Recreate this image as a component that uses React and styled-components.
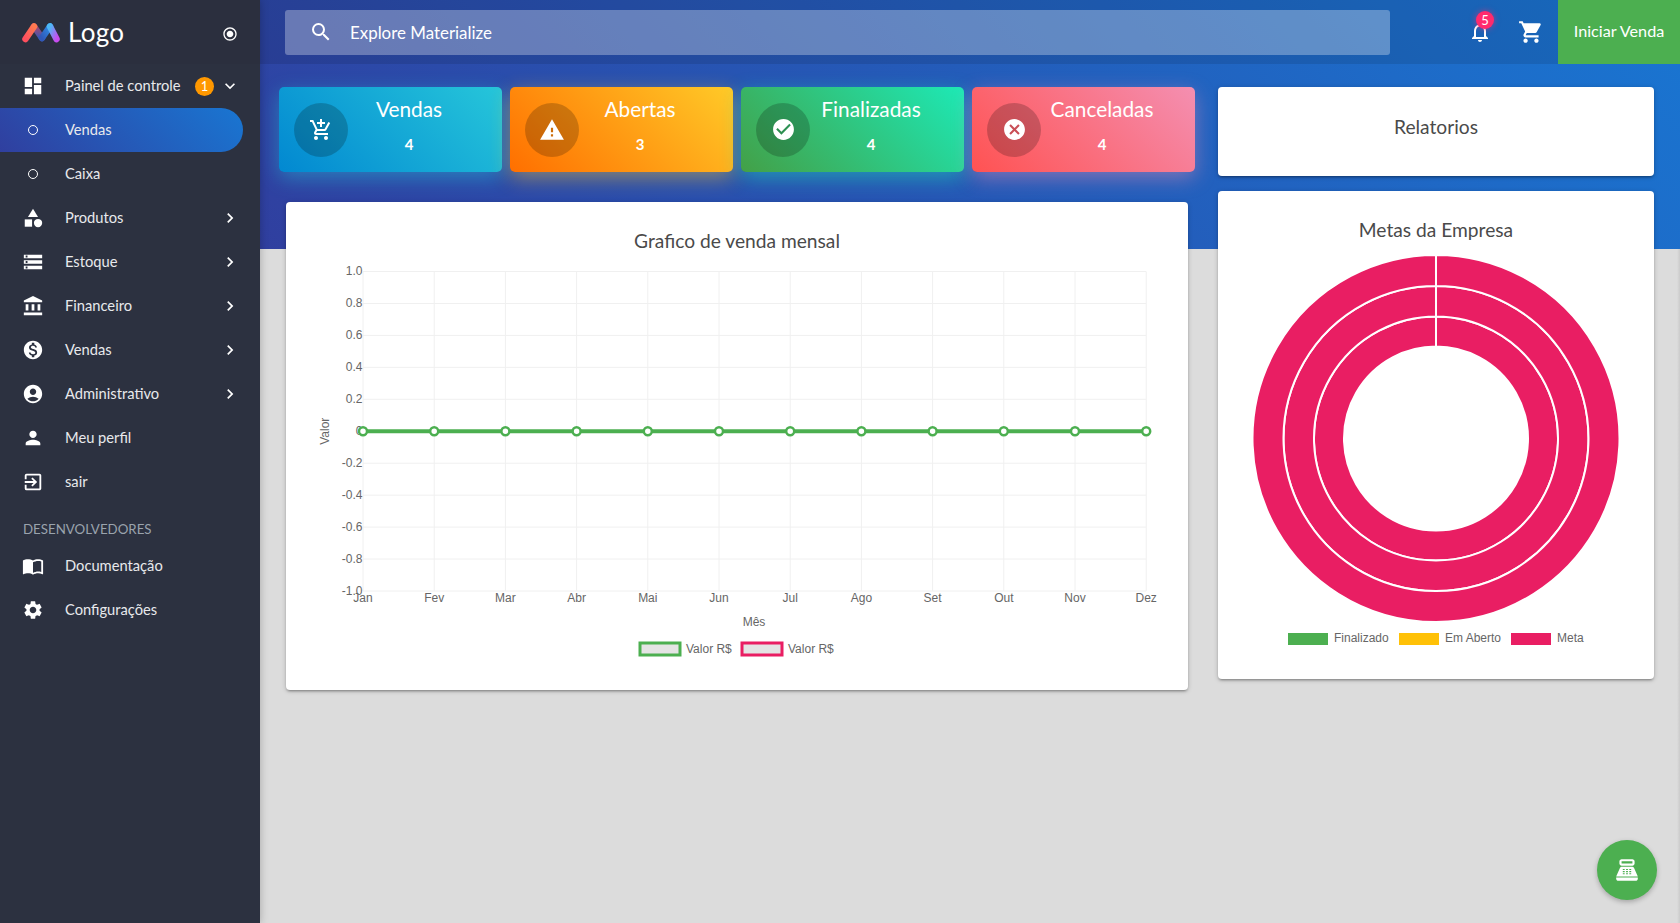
import React from "react";
import styled, { createGlobalStyle } from "styled-components";
import {
  MdDashboard, MdCategory, MdStorage, MdAccountBalance, MdMonetizationOn, MdAccountCircle, MdPerson,
  MdExitToApp, MdImportContacts, MdSettings, MdAddShoppingCart, MdWarning, MdCheckCircle, MdCancel,
  MdNotificationsNone, MdShoppingCart, MdPointOfSale, MdRadioButtonChecked, MdKeyboardArrowRight,
  MdKeyboardArrowDown, MdSearch,
} from "react-icons/md";

const FONT = `"Lato", "Open Sans", sans-serif`;

const Global = createGlobalStyle`
  html, body { margin: 0; padding: 0; height: 100%; overflow: hidden; }
  body { font-family: ${FONT}; background: #dcdcdc; }
  * { box-sizing: border-box; }
`;

const Page = styled.div`
  display: grid;
  grid-template-columns: 260px 1fr;
  width: 1680px;
  height: 923px;
  overflow: hidden;
`;

const Sidebar = styled.aside`
  position: relative;
  z-index: 1;
  background: #2c3140;
  color: #fff;
  display: flex;
  flex-direction: column;
  box-shadow: 0 0 8px rgba(0, 0, 0, 0.25);
`;

const Brand = styled.div`
  height: 64px;
  display: flex;
  align-items: center;
  padding: 0 22px;
  background: #2b2f3e;
`;

const BrandName = styled.span`
  font-size: 26px;
  margin-left: 8px;
  flex: 1;
  letter-spacing: 0.3px;
`;

const BrandToggle = styled(MdRadioButtonChecked)`
  margin-top: 3px;
`;

const Menu = styled.nav`
  display: flex;
  flex-direction: column;
`;

const Item = styled.div`
  height: 44px;
  display: flex;
  align-items: center;
  padding-left: 22px;
  width: ${(p) => (p.$active ? "243px" : "100%")};
  border-radius: ${(p) => (p.$active ? "0 22px 22px 0" : "0")};
  background: ${(p) => (p.$active ? "linear-gradient(45deg, #303f9f, #1976d2)" : "transparent")};
`;

const IconSlot = styled.span`
  width: 22px;
  height: 22px;
  display: flex;
  align-items: center;
  justify-content: center;
  margin-right: 21px;
  color: #fff;
  flex: none;
`;

const Dot = styled.span`
  width: 10px;
  height: 10px;
  border: 1.5px solid #fff;
  border-radius: 50%;
`;

const Label = styled.span`
  font-size: 14.7px;
  color: #e8e9ec;
  flex: 1;
  white-space: nowrap;
  padding-bottom: 2px;
`;

const Count = styled.span`
  width: 19px;
  height: 19px;
  border-radius: 50%;
  background: #ff9800;
  color: #fff;
  font-size: 13px;
  display: flex;
  align-items: center;
  justify-content: center;
  margin-right: 6px;
`;

const Chevron = styled.span`
  width: 20px;
  display: flex;
  justify-content: center;
  margin-right: 20px;
  color: #fff;
`;

const Section = styled.div`
  font-size: 13.3px;
  color: #9aa3ad;
  padding: 15px 0 0 23px;
  height: 40px;
  line-height: 20px;
`;

const Main = styled.main`
  position: relative;
  background:
    linear-gradient(45deg, #303f9f, #1976d2) top left / 100% 249px no-repeat,
    #dcdcdc;
  display: flex;
  flex-direction: column;
`;

const TopBar = styled.header`
  height: 64px;
  display: flex;
  align-items: center;
  background: rgba(0, 0, 0, 0.1);
  padding-left: 25px;
`;

const Search = styled.div`
  width: 1105px;
  height: 45px;
  background: rgba(255, 255, 255, 0.3);
  border-radius: 3px;
  display: flex;
  align-items: center;
  padding-left: 24px;
  color: #fff;
  font-size: 16.9px;
  gap: 17px;
`;

const Tools = styled.div`
  flex: 1;
  display: flex;
  align-items: center;
  height: 100%;
  color: #fff;
`;

const ToolButton = styled.div`
  position: relative;
  display: flex;
  justify-content: center;
  margin-left: ${(p) => p.$gap}px;
`;

const Badge = styled.span`
  position: absolute;
  top: -9px;
  right: -2px;
  width: 18px;
  height: 18px;
  border-radius: 50%;
  background: #ff2a6d;
  box-shadow: 0 0 6px rgba(255, 42, 109, 0.6);
  font-size: 13px;
  display: flex;
  align-items: center;
  justify-content: center;
`;

const StartSale = styled.div`
  margin-left: auto;
  width: 122px;
  height: 100%;
  background: #4caf50;
  color: #fff;
  font-size: 16.2px;
  padding-bottom: 3px;
  display: flex;
  align-items: center;
  justify-content: center;
`;

const Body = styled.div`
  display: grid;
  grid-template-columns: 932px 436px;
  column-gap: 7px;
  padding: 23px 0 0 19px;
`;

const LeftColumn = styled.div`
  display: flex;
  flex-direction: column;
`;

const RightColumn = styled.div`
  display: flex;
  flex-direction: column;
  gap: 15px;
`;

const StatRow = styled.div`
  display: flex;
  gap: 8px;
`;

const Stat = styled.div`
  width: 223px;
  height: 85px;
  border-radius: 5px;
  background: linear-gradient(45deg, ${(p) => p.$from}, ${(p) => p.$to});
  box-shadow: 0 6px 20px 0 ${(p) => p.$glow};
  display: flex;
  align-items: center;
  padding-left: 15px;
  color: #fff;
`;

const StatIcon = styled.span`
  width: 54px;
  height: 54px;
  border-radius: 50%;
  background: rgba(0, 0, 0, 0.2);
  display: flex;
  align-items: center;
  justify-content: center;
  flex: none;
`;

const StatText = styled.div`
  flex: 1;
  text-align: center;
  padding: 0 32px 10px 0;
`;

const StatTitle = styled.div`
  font-size: 20.8px;
  line-height: 26px;
`;

const StatValue = styled.div`
  font-size: 15px;
  font-weight: 700;
  margin-top: 12px;
  line-height: 20px;
`;

const Card = styled.section`
  background: #fff;
  border-radius: 4px;
  box-shadow: 0 2px 2px 0 rgba(0, 0, 0, 0.14), 0 3px 1px -2px rgba(0, 0, 0, 0.12), 0 1px 5px 0 rgba(0, 0, 0, 0.2);
`;

const ChartCard = styled(Card)`
  margin: 30px 0 0 7px;
  width: 902px;
  height: 488px;
  padding-top: 28px;
`;

const CardTitle = styled.h2`
  margin: 0 0 1px;
  font-size: 19.2px;
  font-weight: 400;
  color: #4a4a4a;
  text-align: center;
  line-height: 22px;
`;

const ReportCard = styled(Card)`
  height: 89px;
  display: flex;
  align-items: center;
  justify-content: center;
  font-size: 19.2px;
  color: #4a4a4a;
  padding-bottom: 10px;
`;

const GoalCard = styled(Card)`
  height: 488px;
  padding-top: 28px;
`;

const ChartSvg = styled.svg`
  display: block;
  width: 100%;
`;

const Fab = styled.div`
  position: absolute;
  right: 23px;
  bottom: 23px;
  width: 60px;
  height: 60px;
  border-radius: 50%;
  background: #4caf50;
  color: #fff;
  display: flex;
  align-items: center;
  justify-content: center;
  box-shadow: 0 2px 5px rgba(0, 0, 0, 0.25);
`;

const EdgeShade = styled.div`
  position: absolute;
  right: 0;
  top: 249px;
  bottom: 0;
  width: 3px;
  background: linear-gradient(to right, rgba(0, 0, 0, 0), rgba(0, 0, 0, 0.08));
`;

const Logo = () => (
  <svg width="38" height="21" viewBox="0 0 38 21">
    <defs>
      <linearGradient id="lgA" x1="0" y1="1" x2="1" y2="0">
        <stop offset="0" stopColor="#ff4f5e" />
        <stop offset="1" stopColor="#ff7a50" />
      </linearGradient>
      <linearGradient id="lgM" x1="0" y1="0" x2="0" y2="1">
        <stop offset="0" stopColor="#a8486e" />
        <stop offset="1" stopColor="#3a56b4" />
      </linearGradient>
      <linearGradient id="lgB" x1="0" y1="1" x2="1" y2="0">
        <stop offset="0" stopColor="#3058b8" />
        <stop offset="1" stopColor="#2f8fe8" />
      </linearGradient>
      <linearGradient id="lgC" x1="0" y1="0" x2="1" y2="1">
        <stop offset="0" stopColor="#4cb8f6" />
        <stop offset="1" stopColor="#c84cf0" />
      </linearGradient>
    </defs>
    <path d="M12 4.5 L20 16" fill="none" stroke="url(#lgM)" strokeWidth="6.5" strokeLinecap="round" />
    <path d="M3.5 17 L12 4.5" fill="none" stroke="url(#lgA)" strokeWidth="6.5" strokeLinecap="round" />
    <path d="M20 16 L28 4.5" fill="none" stroke="url(#lgB)" strokeWidth="6.5" strokeLinecap="round" />
    <path d="M28 4.5 L34.5 17" fill="none" stroke="url(#lgC)" strokeWidth="6.5" strokeLinecap="round" />
  </svg>
);

const MONTHS = ["Jan", "Fev", "Mar", "Abr", "Mai", "Jun", "Jul", "Ago", "Set", "Out", "Nov", "Dez"];
const TICKS = ["1.0", "0.8", "0.6", "0.4", "0.2", "0", "-0.2", "-0.4", "-0.6", "-0.8", "-1.0"];

const LineChart = () => {
  const x0 = 77, dx = 71.2, y0 = 18.5, dy = 31.95;
  const xs = MONTHS.map((_, i) => x0 + i * dx);
  const ys = TICKS.map((_, i) => y0 + i * dy);
  const zero = ys[5];
  const bottom = ys[10];
  const t = { fontFamily: "Liberation Sans, sans-serif", fontSize: 12, fill: "#666" };
  return (
    <ChartSvg viewBox="0 0 902 437" height="437">
      {ys.map((y, i) => <line key={i} x1={x0} x2={xs[11]} y1={y} y2={y} stroke="#f0f0f0" />)}
      {xs.map((x, i) => <line key={i} x1={x} x2={x} y1={y0} y2={bottom} stroke="#f0f0f0" />)}
      {ys.map((y, i) => <text key={i} {...t} x={x0 - 0.5} y={y + 3.5} textAnchor="end">{TICKS[i]}</text>)}
      {xs.map((x, i) => <text key={i} {...t} x={x} y={bottom + 11} textAnchor="middle">{MONTHS[i]}</text>)}
      <text {...t} x={468} y={bottom + 35} textAnchor="middle">Mês</text>
      <text {...t} transform={`translate(43 ${zero}) rotate(-90)`} textAnchor="middle">Valor</text>
      <line x1={xs[0]} x2={xs[11]} y1={zero} y2={zero} stroke="#4caf50" strokeWidth="4" />
      {xs.map((x, i) => <circle key={i} cx={x} cy={zero} r="4" fill="#fff" stroke="#4caf50" strokeWidth="2.5" />)}
      <rect x={354} y={390} width="40" height="12" fill="#e4e4e4" stroke="#4caf50" strokeWidth="3" />
      <text {...t} x={400} y={400}>Valor R$</text>
      <rect x={456} y={390} width="40" height="12" fill="#e4e4e4" stroke="#e91e63" strokeWidth="3" />
      <text {...t} x={502} y={400}>Valor R$</text>
    </ChartSvg>
  );
};

const polar = (cx, cy, r, a) => [cx + r * Math.sin(a), cy - r * Math.cos(a)];
const ring = (cx, cy, r0, r1) => {
  const e = 0.0001;
  const [ax, ay] = polar(cx, cy, r1, e);
  const [bx, by] = polar(cx, cy, r1, 2 * Math.PI - e);
  const [cx2, cy2] = polar(cx, cy, r0, 2 * Math.PI - e);
  const [dx, dy] = polar(cx, cy, r0, e);
  return `M${ax} ${ay} A${r1} ${r1} 0 1 1 ${bx} ${by} L${cx2} ${cy2} A${r0} ${r0} 0 1 0 ${dx} ${dy} Z`;
};

const Donut = () => {
  const cx = 218, cy = 196.5;
  const t = { fontFamily: "Liberation Sans, sans-serif", fontSize: 12, fill: "#666" };
  return (
    <ChartSvg viewBox="0 0 436 437" height="437">
      {[[92, 122], [122, 152.5], [152.5, 183.5]].map(([a, b], i) => (
        <path key={i} d={ring(cx, cy, a, b)} fill="#e91e63" stroke="#fff" strokeWidth="2" />
      ))}
      <rect x="70" y="391" width="40" height="12" fill="#4caf50" />
      <text {...t} x="116" y="400">Finalizado</text>
      <rect x="181" y="391" width="40" height="12" fill="#ffc107" />
      <text {...t} x="227" y="400">Em Aberto</text>
      <rect x="293" y="391" width="40" height="12" fill="#e91e63" />
      <text {...t} x="339" y="400">Meta</text>
    </ChartSvg>
  );
};

const MENU = [
  { icon: <MdDashboard size={22} />, label: "Painel de controle", open: true, count: 1 },
  { dot: true, label: "Vendas", active: true },
  { dot: true, label: "Caixa" },
  { icon: <MdCategory size={22} />, label: "Produtos", arrow: true },
  { icon: <MdStorage size={22} />, label: "Estoque", arrow: true },
  { icon: <MdAccountBalance size={22} />, label: "Financeiro", arrow: true },
  { icon: <MdMonetizationOn size={22} />, label: "Vendas", arrow: true },
  { icon: <MdAccountCircle size={22} />, label: "Administrativo", arrow: true },
  { icon: <MdPerson size={22} />, label: "Meu perfil" },
  { icon: <MdExitToApp size={22} />, label: "sair" },
];

const DEV = [
  { icon: <MdImportContacts size={22} />, label: "Documentação" },
  { icon: <MdSettings size={22} />, label: "Configurações" },
];

const MenuRow = ({ it }) => (
  <Item $active={it.active}>
    <IconSlot>{it.dot ? <Dot /> : it.icon}</IconSlot>
    <Label>{it.label}</Label>
    {it.count && <Count>{it.count}</Count>}
    {it.open && <Chevron><MdKeyboardArrowDown size={20} /></Chevron>}
    {it.arrow && <Chevron><MdKeyboardArrowRight size={20} /></Chevron>}
  </Item>
);

const STATS = [
  { title: "Vendas", value: 4, from: "#0288d1", to: "#26c6da", glow: "rgba(38,198,218,.45)", icon: <MdAddShoppingCart size={24} /> },
  { title: "Abertas", value: 3, from: "#ff6f00", to: "#ffca28", glow: "rgba(255,202,40,.45)", icon: <MdWarning size={26} /> },
  { title: "Finalizadas", value: 4, from: "#43a047", to: "#1de9b6", glow: "rgba(29,233,182,.45)", icon: <MdCheckCircle size={25} /> },
  { title: "Canceladas", value: 4, from: "#ff5252", to: "#f48fb1", glow: "rgba(244,143,177,.45)", icon: <MdCancel size={25} /> },
];

export default function App() {
  return (
    <Page>
      <Global />
      <Sidebar>
        <Brand>
          <Logo />
          <BrandName>Logo</BrandName>
          <BrandToggle size={16} />
        </Brand>
        <Menu>
          {MENU.map((it, i) => <MenuRow key={i} it={it} />)}
          <Section>DESENVOLVEDORES</Section>
          {DEV.map((it, i) => <MenuRow key={i} it={it} />)}
        </Menu>
      </Sidebar>
      <Main>
        <TopBar>
          <Search>
            <MdSearch size={24} />
            <span>Explore Materialize</span>
          </Search>
          <Tools>
            <ToolButton $gap={78}>
              <MdNotificationsNone size={24} />
              <Badge>5</Badge>
            </ToolButton>
            <ToolButton $gap={26}><MdShoppingCart size={26} /></ToolButton>
            <StartSale>Iniciar Venda</StartSale>
          </Tools>
        </TopBar>
        <Body>
          <LeftColumn>
            <StatRow>
              {STATS.map((s) => (
                <Stat key={s.title} $from={s.from} $to={s.to} $glow={s.glow}>
                  <StatIcon>{s.icon}</StatIcon>
                  <StatText>
                    <StatTitle>{s.title}</StatTitle>
                    <StatValue>{s.value}</StatValue>
                  </StatText>
                </Stat>
              ))}
            </StatRow>
            <ChartCard>
              <CardTitle>Grafico de venda mensal</CardTitle>
              <LineChart />
            </ChartCard>
          </LeftColumn>
          <RightColumn>
            <ReportCard>Relatorios</ReportCard>
            <GoalCard>
              <CardTitle>Metas da Empresa</CardTitle>
              <Donut />
            </GoalCard>
          </RightColumn>
        </Body>
        <Fab><MdPointOfSale size={26} /></Fab>
        <EdgeShade />
      </Main>
    </Page>
  );
}
